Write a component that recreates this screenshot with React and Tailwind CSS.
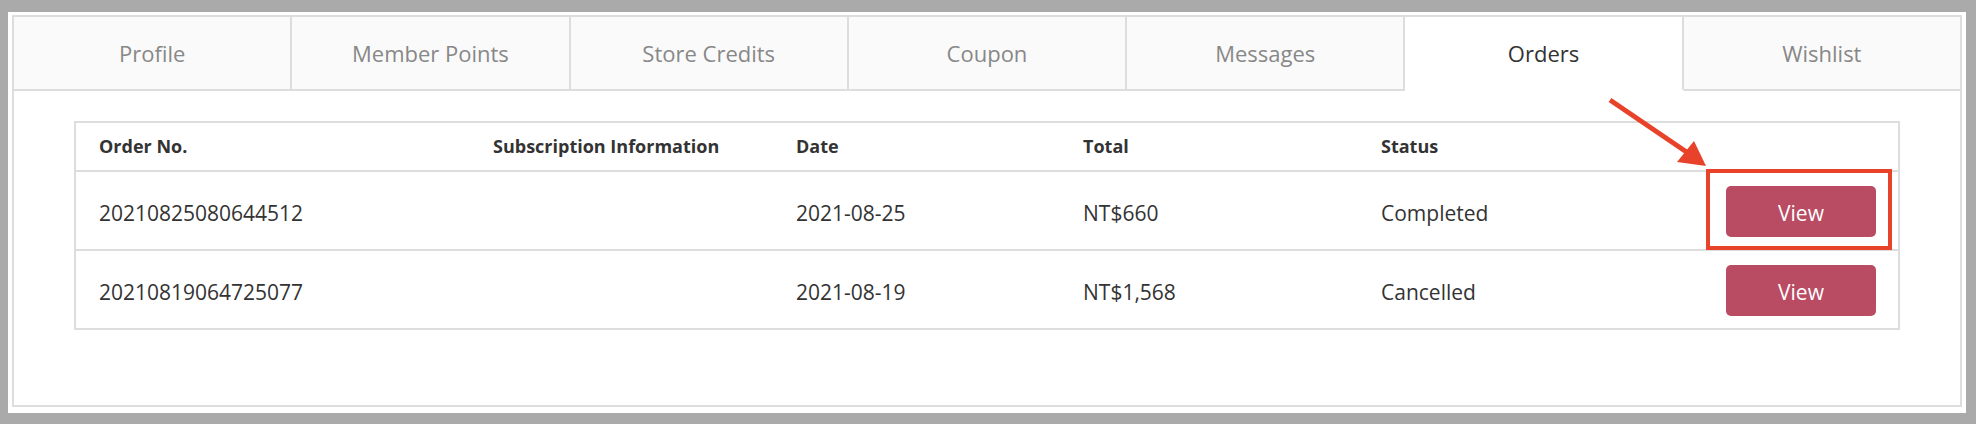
const tabs = ['Profile', 'Member Points', 'Store Credits', 'Coupon', 'Messages', 'Orders', 'Wishlist'];

const orders = [
  { no: '20210825080644512', info: '', date: '2021-08-25', total: 'NT$660', status: 'Completed' },
  { no: '20210819064725077', info: '', date: '2021-08-19', total: 'NT$1,568', status: 'Cancelled' },
];

const cols = 'grid grid-cols-[394px_303px_287px_298px_300px_1fr]';

const App = () => {
  const active = 'Orders';

  return (
    <div className="relative w-[1976px] h-[424px] bg-[#aaaaaa] pl-[8px] pt-[12px] pr-[10px] pb-[11px] font-['Open_Sans',sans-serif]">
      <div className="h-full bg-white pl-[4px] pt-[3px] pr-[4px] pb-[6px]">
        <div className="h-full border-2 border-[#dddddd] flex flex-col">
          {/* tabs */}
          <div className="flex h-[74px]">
            {tabs.map((tab, i) => (
              <div
                key={tab}
                className={
                  'flex-1 flex items-center justify-center text-[22px] ' +
                  (i < tabs.length - 1 ? 'border-r-2 border-r-[#dddddd] ' : '') +
                  (tab === active
                    ? 'bg-white text-[#333333] border-b-2 border-b-white'
                    : 'bg-[#fafafa] text-[#888888] border-b-2 border-b-[#dddddd]')
                }
              >
                {tab}
              </div>
            ))}
          </div>

          {/* orders table */}
          <div className="px-[60px] pt-[30px]">
            <div className="border-2 border-[#dddddd] text-[#333333]">
              <div className={cols + ' h-[47px] items-center text-[18px] font-bold'}>
                <div className="pl-[23px]">Order No.</div>
                <div className="pl-[23px]">Subscription Information</div>
                <div className="pl-[23px]">Date</div>
                <div className="pl-[23px]">Total</div>
                <div className="pl-[23px]">Status</div>
                <div></div>
              </div>
              {orders.map((o) => (
                <div key={o.no} className={cols + ' h-[79px] items-center text-[21px] border-t-2 border-[#dddddd]'}>
                  <div className="pl-[23px] pt-[7px]">{o.no}</div>
                  <div className="pl-[23px] pt-[7px]">{o.info}</div>
                  <div className="pl-[23px] pt-[7px]">{o.date}</div>
                  <div className="pl-[23px] pt-[7px]">{o.total}</div>
                  <div className="pl-[23px] pt-[7px]">{o.status}</div>
                  <div className="flex justify-end pr-[22px] pt-[2px]">
                    <button className="w-[150px] h-[51px] rounded-[5px] bg-[#b94b63] text-white text-[21px] pt-[4px]">View</button>
                  </div>
                </div>
              ))}
            </div>
          </div>
        </div>
      </div>

      {/* annotation: red box + arrow */}
      <div className="absolute left-[1706px] top-[169px] w-[186px] h-[81px] border-4 border-[#e8432a] pointer-events-none"></div>
      <svg className="absolute left-0 top-0 pointer-events-none" width="1976" height="424">
        <line x1="1610" y1="100" x2="1688" y2="153" stroke="#e8432a" strokeWidth="5" />
        <polygon points="1706,166 1677,162 1694,141" fill="#e8432a" />
      </svg>
    </div>
  );
};

export default App;
